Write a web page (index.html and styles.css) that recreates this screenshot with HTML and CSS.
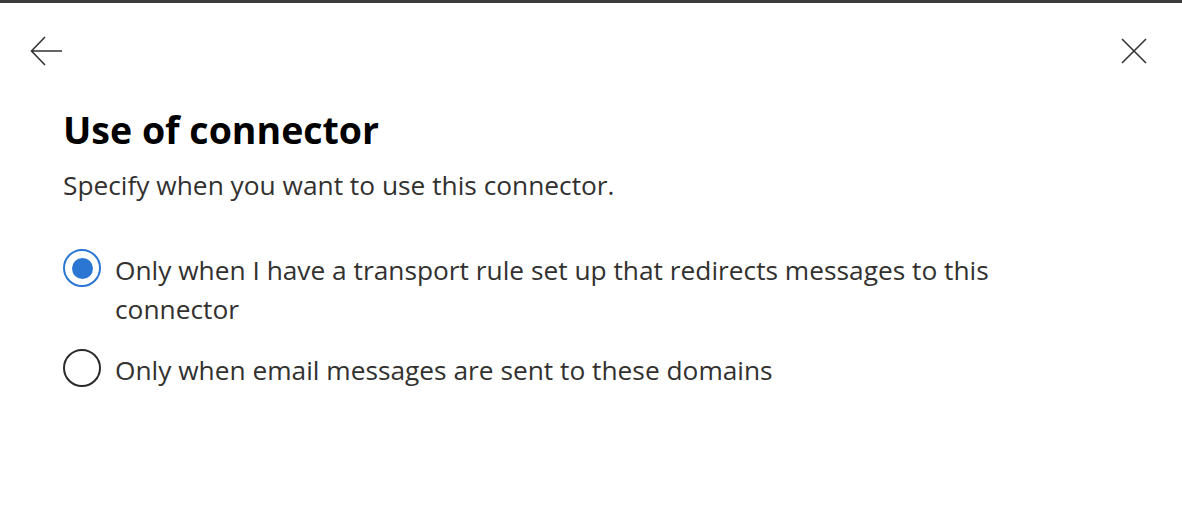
FILE: index.html
```html
<!DOCTYPE html>
<html lang="en">
<head>
    <meta charset="UTF-8">
    <meta name="viewport" content="width=device-width, initial-scale=1.0">
    <title>Use of connector</title>
    <link rel="stylesheet" href="styles.css">
</head>
<body>
    <div class="panel">
        <!-- top bar with back and close -->
        <div class="topbar">
            <button class="icon-btn" aria-label="Back">
                <svg width="32" height="30" viewBox="0 0 32 30">
                    <path d="M15 1 L1.5 15 L15 29 M1.5 15 H32" fill="none" stroke="#333" stroke-width="1.6"/>
                </svg>
            </button>
            <button class="icon-btn" aria-label="Close">
                <svg width="26" height="26" viewBox="0 0 26 26">
                    <path d="M1 1 L25 25 M25 1 L1 25" fill="none" stroke="#333" stroke-width="1.6"/>
                </svg>
            </button>
        </div>

        <div class="content">
            <h1 class="title">Use of connector</h1>
            <p class="subtitle">Specify when you want to use this connector.</p>

            <div class="options">
                <label class="option">
                    <span class="radio checked"><span class="dot"></span></span>
                    <span class="option-text">Only when I have a transport rule set up that redirects messages to this connector</span>
                </label>
                <label class="option">
                    <span class="radio"></span>
                    <span class="option-text">Only when email messages are sent to these domains</span>
                </label>
            </div>
        </div>
    </div>
</body>
</html>
```

FILE: styles.css
```css
body {
    margin: 0;
    padding: 0;
    background-color: #fff;
    font-family: "Open Sans", "Noto Sans", Arial, sans-serif;
    color: #323130;
}

.panel {
    border-top: 3px solid #3b3b3b;
    height: 509px;
}

.topbar {
    display: flex;
    justify-content: space-between;
    align-items: center;
    padding: 33px 35px 0 30px;
}

.icon-btn {
    background: none;
    border: none;
    padding: 0;
    margin: 0;
    display: flex;
    cursor: pointer;
}

.content {
    padding: 0 40px 0 63px;
}

.title {
    margin: 39px 0 0;
    font-size: 37.5px;
    font-weight: 700;
    color: #000;
    line-height: 50px;
}

.subtitle {
    margin: 13px 0 0;
    font-size: 26.3px;
    line-height: 34px;
}

.options {
    display: flex;
    flex-direction: column;
    gap: 22px;
    margin-top: 49px;
    max-width: 982px;
}

.option {
    display: flex;
    align-items: flex-start;
    gap: 14px;
    cursor: pointer;
}

.radio {
    flex: none;
    width: 34px;
    height: 34px;
    margin-top: -2px;
    border: 2px solid #2b2b2b;
    border-radius: 50%;
    display: flex;
    align-items: center;
    justify-content: center;
}

.radio.checked {
    border-color: #2b76d2;
}

.dot {
    width: 21px;
    height: 21px;
    border-radius: 50%;
    background-color: #2b76d2;
}

.option-text {
    font-size: 26.3px;
    line-height: 39px;
}
```
